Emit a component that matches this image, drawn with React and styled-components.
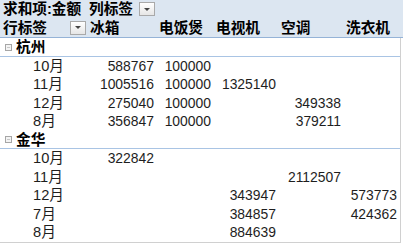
import styled, { createGlobalStyle } from "styled-components";

const GlobalStyle = createGlobalStyle`
  html, body {
    margin: 0;
    padding: 0;
    background: #fff;
  }
  body {
    font-family: "Liberation Sans", "Noto Sans CJK SC", sans-serif;
    font-size: 14.67px;
    color: #1e1e1e;
  }
`;

const COLS = "88px 69px 57px 65px 65px 56px";

const Sheet = styled.div`
  width: 403px;
  height: 243px;
  overflow: hidden;
`;

const Header = styled.div`
  background: #dce6f1;
  border-bottom: 1px solid #95b3d7;
  width: 403px;
`;

const HeaderRow = styled.div`
  display: grid;
  grid-template-columns: ${COLS.replace("56px", "1fr")};
  height: 18.5px;
`;

const Body = styled.div`
  width: 400px;
  border-right: 1px solid #d0d0d0;
  border-bottom: 1px solid #d0d0d0;
`;

const Row = styled.div`
  display: grid;
  grid-template-columns: ${COLS};
  height: ${(p) => (p.$group ? "18.5px" : "18.5px")};
  box-sizing: border-box;
  border-bottom: ${(p) => (p.$group ? "1px solid #a9c4e4" : "none")};
`;

const Cell = styled.div`
  display: flex;
  align-items: center;
  justify-content: ${(p) => (p.$right ? "flex-end" : "flex-start")};
  padding: ${(p) => (p.$right ? "0 3px 0 0" : `0 0 0 ${p.$indent || 2}px`)};
  font-weight: ${(p) => (p.$bold ? 700 : 400)};
  color: ${(p) => (p.$bold ? "#000" : "#1e1e1e")};
  white-space: nowrap;
  line-height: 18px;
  min-width: 0;
`;

const Spread = styled(Cell)`
  justify-content: space-between;
  padding-right: 2px;
`;

const Num = styled.span`
  font-size: 13.9px;
`;

const Dropdown = styled.span`
  width: 14px;
  height: 12px;
  border: 1px solid #a9a9a9;
  background: linear-gradient(#ffffff, #e6e6e6);
  display: flex;
  align-items: center;
  justify-content: center;
  &::after {
    content: "";
    border-left: 3px solid transparent;
    border-right: 3px solid transparent;
    border-top: 3px solid #444;
  }
`;

const Collapse = styled.span`
  width: 5px;
  height: 5px;
  border: 1px solid #a6a6a6;
  background: #f4f4f4;
  margin-right: 4px;
  display: flex;
  align-items: center;
  justify-content: center;
  &::after {
    content: "";
    width: 3px;
    height: 1px;
    background: #c8c8c8;
  }
`;

const products = ["冰箱", "电饭煲", "电视机", "空调", "洗衣机"];

const groups = [
  {
    name: "杭州",
    rows: [
      ["10月", 588767, 100000],
      ["11月", 1005516, 100000, 1325140],
      ["12月", 275040, 100000, null, 349338],
      ["8月", 356847, 100000, null, 379211],
    ],
  },
  {
    name: "金华",
    rows: [
      ["10月", 322842],
      ["11月", null, null, null, 2112507],
      ["12月", null, null, 343947, null, 573773],
      ["7月", null, null, 384857, null, 424362],
      ["8月", null, null, 884639],
    ],
  },
];

const App = () => {
  return (
    <Sheet>
      <GlobalStyle />
      <Header>
        <HeaderRow>
          <Cell $bold $indent={3} style={{ overflow: "visible" }}>
            求和项:金额
          </Cell>
          <Spread $bold $indent={1}>
            列标签
            <Dropdown />
          </Spread>
        </HeaderRow>
        <HeaderRow>
          <Spread $bold $indent={3}>
            行标签
            <Dropdown />
          </Spread>
          {products.map((p) => (
            <Cell key={p} $bold $indent={2}>
              {p}
            </Cell>
          ))}
        </HeaderRow>
      </Header>
      <Body>
        {groups.map((g) => (
          <div key={g.name}>
            <Row $group>
              <Cell $bold $indent={5}>
                <Collapse />
                {g.name}
              </Cell>
            </Row>
            {g.rows.map(([label, ...vals]) => (
              <Row key={label}>
                <Cell $indent={33}>{label}</Cell>
                {products.map((p, i) => (
                  <Cell key={p} $right>
                    {vals[i] != null && <Num>{vals[i]}</Num>}
                  </Cell>
                ))}
              </Row>
            ))}
          </div>
        ))}
      </Body>
    </Sheet>
  );
};

export default App;
